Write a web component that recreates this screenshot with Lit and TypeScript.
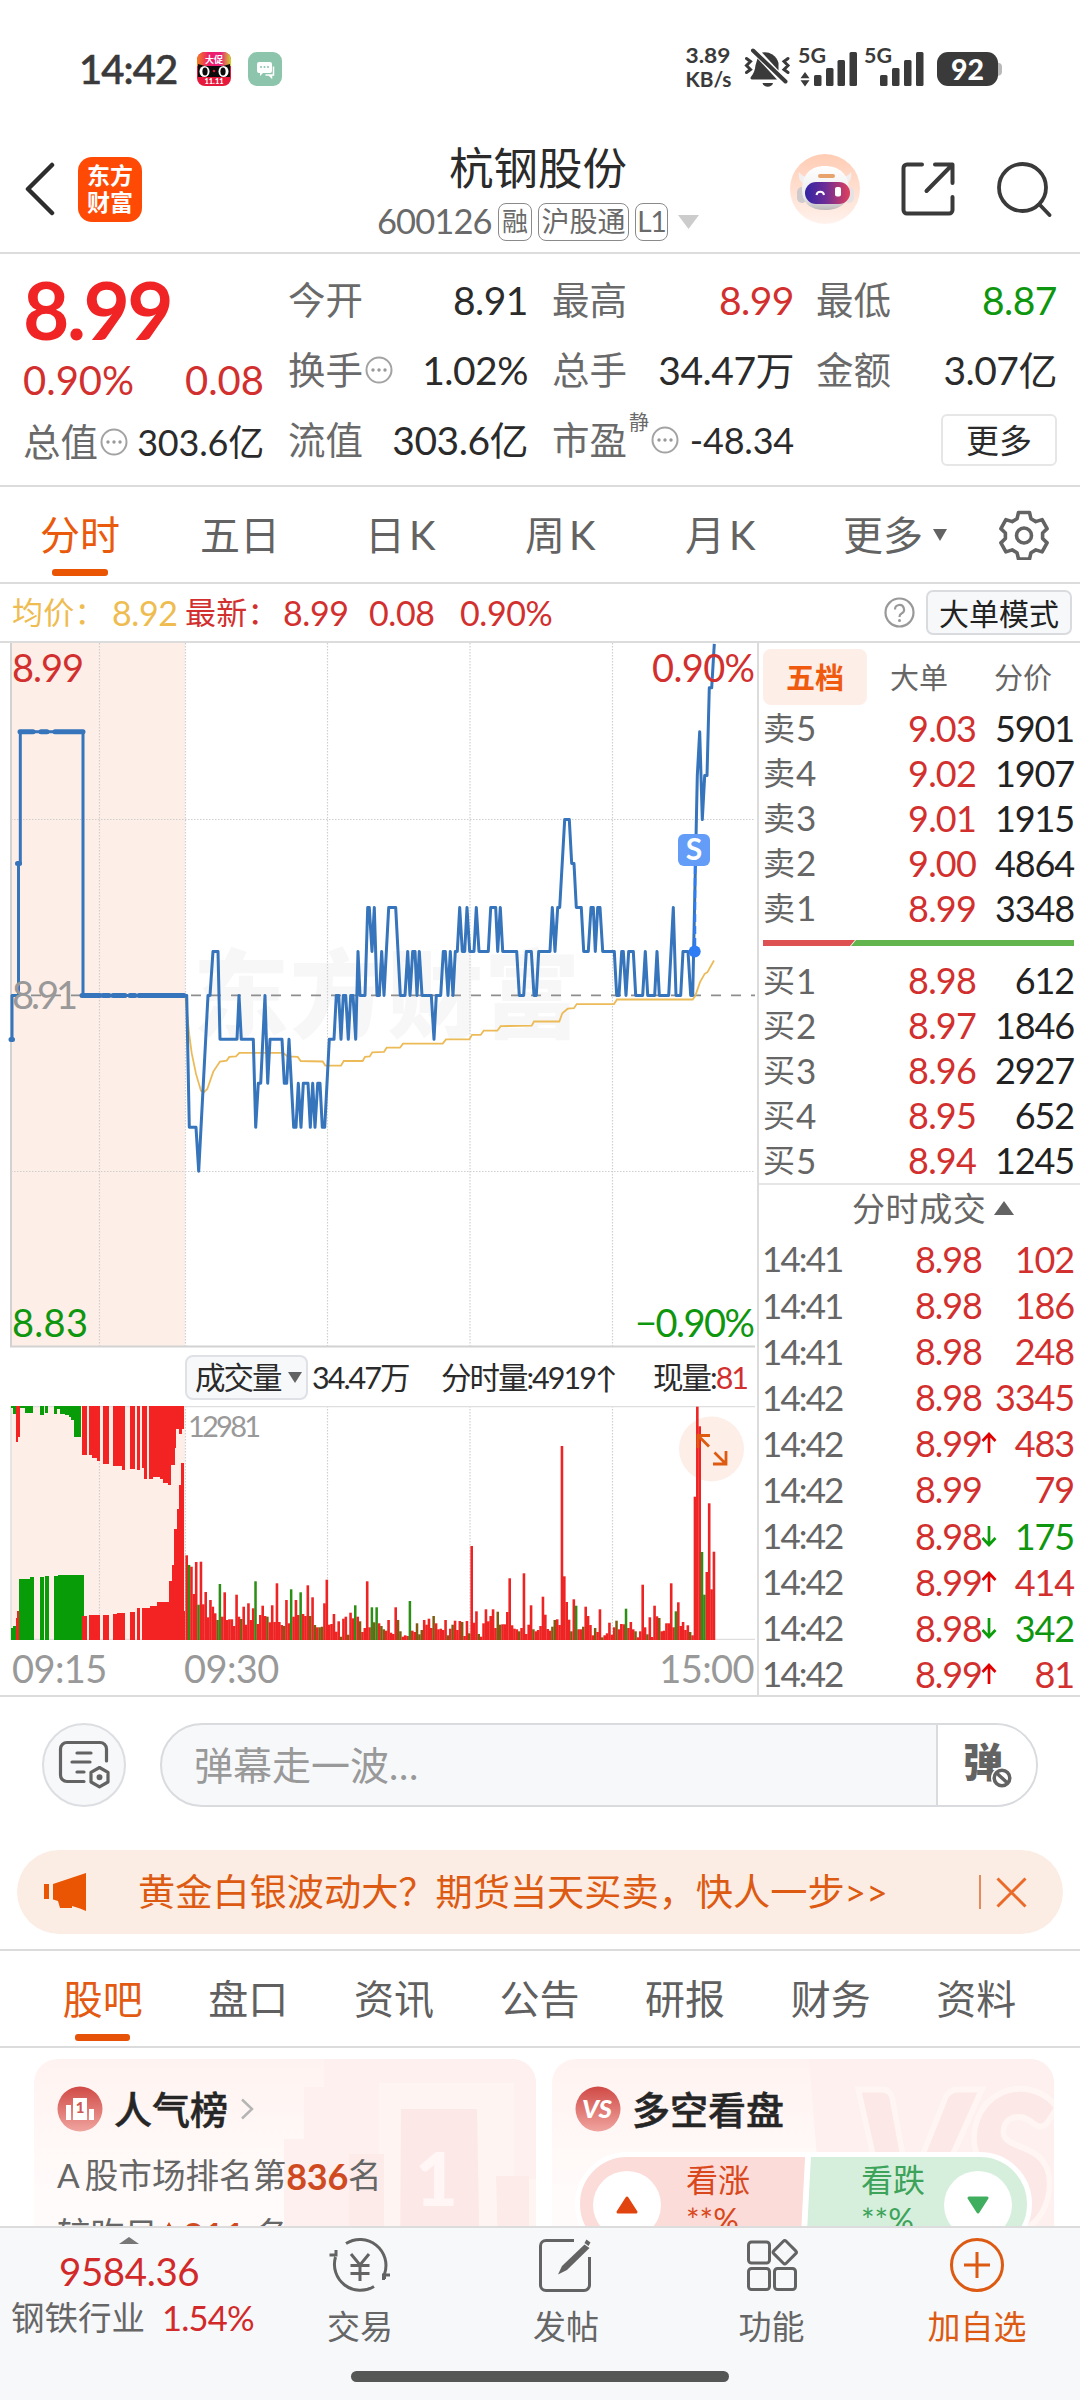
import { LitElement, html, svg, css } from "lit";
import { customElement } from "lit/decorators.js";

/* ---------- data ---------- */

// Pre-market trace: x, price offset from 8.91 in cents
const PRE: number[][] = [
  [12, -1], [12, 0], [18.5, 0], [18.5, 3], [20.3, 3], [20.3, 6], [83, 6], [83, 0], [185, 0],
];

// Session trace, x in thirds of a pixel
const AM: number[][] = [
  [556, 0], [560, 0], [568, -3], [588, -3], [596, -4], [624, 0], [630, 0], [639, 1], [654, 1], [660, -1], [711, -1],
  [717, 0], [724, -1], [760, -1], [767, -3], [775, -2], [782, -2], [795, 0], [803, -2], [810, -1], [846, -1],
  [853, -2], [860, -2], [867, -1], [881, -3], [888, -3], [895, -2], [903, -3], [910, -2], [924, -2], [931, -3],
  [938, -2], [945, -3], [953, -2], [960, -2], [967, -3], [974, -3], [988, -1], [1002, -1], [1009, 0], [1016, 0],
  [1023, -1], [1030, 0], [1037, 0], [1045, -1], [1052, 0], [1059, 0], [1067, -1], [1074, 1], [1080, 0], [1095, 0],
  [1103, 2], [1108, 2], [1116, 1], [1123, 2], [1131, 0], [1138, 0], [1145, 1], [1152, 0], [1166, 2], [1187, 2],
];
const PM: number[][] = [
  [301, 0], [315, 0], [323, 1], [330, 0], [338, 1], [345, 1], [351, 0], [358, 1], [366, 0], [394, 0], [402, -1],
  [409, 0], [422, 0], [430, 1], [436, 1], [444, 0], [451, 1], [459, 0], [466, 1], [472, 1], [479, 2], [487, 1],
  [494, 1], [501, 2], [509, 1], [522, 1], [529, 2], [537, 1], [565, 1], [572, 2], [587, 2], [593, 1], [601, 2],
  [608, 1], [650, 1], [658, 0], [671, 0], [679, 1], [694, 1], [702, 0], [709, 0], [716, 1], [750, 1], [757, 2],
  [765, 1], [773, 2], [779, 2], [794, 4], [808, 4], [815, 3], [822, 3], [829, 2], [844, 2], [851, 1], [865, 1],
  [873, 2], [880, 2], [886, 1], [893, 2], [900, 2], [908, 1], [943, 1], [950, 0], [957, 0], [965, 1], [970, 1],
  [978, 0], [986, 1], [1000, 1], [1007, 0], [1028, 0], [1036, 1], [1043, 0], [1064, 0], [1071, 1], [1078, 0],
  [1106, 0], [1120, 2], [1128, 0], [1142, 0], [1149, 1], [1164, 1], [1172, 0], [1178, 0], [1192, 5], [1199, 6],
  [1207, 4], [1214, 5], [1221, 5], [1228, 7], [1235, 7], [1243, 8],
];
const AVG: number[][] = [
  [556, 774], [568, 860], [575, 900], [588, 945], [603, 982], [612, 985], [622, 978], [640, 940], [660, 918],
  [680, 916], [688, 908], [708, 907], [718, 899], [850, 899], [862, 907], [893, 908], [902, 917], [968, 918],
  [976, 927], [1023, 927], [1031, 917], [1088, 917], [1095, 908], [1109, 907], [1117, 898], [1152, 897],
  [1160, 888], [1200, 888], [1209, 879], [1328, 879], [1338, 870], [1408, 870], [1416, 860], [1442, 860],
  [1451, 851], [1492, 851], [1502, 841], [1595, 840], [1602, 831], [1678, 831], [1687, 813], [1703, 803],
  [1722, 802], [1730, 793], [1842, 793], [1851, 783], [2078, 783], [2086, 775], [2100, 745], [2114, 727],
  [2122, 724], [2142, 698],
];

const MID = 995.4;
const CENT = 43.95;
const pricePts = [
  ...PRE.map(([x, v]) => [x, MID - v * CENT]),
  ...AM.map(([x, v]) => [x / 3, MID - v * CENT]),
  ...PM.map(([x, v]) => [300 + x / 3, MID - v * CENT]),
].map(([x, y]) => `${x.toFixed(1)},${y.toFixed(1)}`).join(" ");
const avgPts = AVG.map(([x, y]) => {
  const px = x > 1200 ? 300 + (x - 900) / 3 : x / 3;
  return `${px.toFixed(1)},${(640 + y / 2.178).toFixed(1)}`;
}).join(" ");

// One entry per minute: height and direction
const MINUTES = (
  "254r 225g 220r 138r 234r 106g 235r 107r 144r 68r 120r 100r 80r 60g 168g 70r 143r 60r 62r 62r 42r 136r 70r 63g " +
  "100r 46r 110r 60r 95r 176g 48r 75r 103r 72r 70g 53r 104r 54r 170r 54r 45r 42g 120r 50r 152g 70r 120r 75r 143g " +
  "78r 72r 164r 72g 128r 45g 38r 38g 40g 110r 181r 46r 48r 78r 25r 56r 10g 64r 70r 16g 82r 65r 104g 70r 56g 24r " +
  "36r 176r 38r 98g 53g 98g 50r 42g 32g 28r 60r 22r 18r 98r 60g 26g 10r 14r 12r 117g 28r 24r 50g 17g 30g 60r 46r " +
  "64r 36r 72g 50r 32r 34r 30r 60r 14g 34r 46g 58r 30r 57r 54g 12r 57r 20g 282r 52r 86r 18g 10r 50r 92r 56r 72r " +
  "92r 36r 85g 46g 47r 47r 84r 185r 44r 34r 32r 26g 36r 200r 18r 46r 104r 32g 26r 30r 42r 130r 76r 33r 28r 40g " +
  "60g 62r 45r 582r 191r 114r 61r 26g 122r 103g 32r 32r 40g 100r 72r 45r 14r 36g 24r 92r 8g 14r 20r 52r 16r 38r " +
  "58g 32r 48r 47r 94g 36r 54r 32r 26g 8r 26r 166r 38r 17g 68r 9r 103r 71r 66g 26r 28r 50r 50r 170r 38r 86g 113r " +
  "42r 54r 30r 44r 24g 14r 430r 700r 641r 264g 136g 204r 410r 152r 265r"
).split(" ").map((s) => ({ h: parseInt(s, 10), up: s.endsWith("r") }));

// Auction bars hanging from the top: x0, x1, y1, direction
const TOP: [number, number, number, string][] = [
  [33, 40, 204, "g"], [40, 48, 223, "g"], [48, 54, 306, "r"], [54, 60, 292, "r"], [60, 75, 203, "g"],
  [75, 100, 219, "g"], [120, 132, 224, "g"], [136, 145, 220, "g"], [162, 172, 221, "g"], [172, 180, 206, "g"],
  [180, 196, 221, "g"], [196, 206, 226, "g"], [206, 214, 232, "g"], [214, 222, 241, "g"], [222, 243, 290, "g"],
  [246, 262, 344, "r"], [268, 277, 344, "r"], [277, 290, 354, "r"], [290, 300, 363, "r"], [308, 328, 373, "r"],
  [338, 365, 377, "r"], [365, 375, 390, "r"], [389, 404, 387, "r"], [410, 421, 391, "r"], [425, 433, 384, "r"],
  [433, 442, 416, "r"], [447, 458, 416, "r"], [458, 480, 410, "r"], [480, 490, 418, "r"], [490, 503, 428, "r"],
  [503, 512, 434, "r"], [512, 524, 375, "r"], [524, 528, 325, "r"], [528, 536, 268, "r"], [536, 545, 281, "r"],
  [545, 552, 268, "r"],
];
const BOTTOM: [number, number, number, string][] = [
  [33, 40, 865, "g"], [40, 48, 857, "g"], [48, 52, 835, "r"], [52, 58, 813, "r"], [57, 91, 717, "g"],
  [91, 102, 712, "g"], [120, 132, 710, "g"], [136, 146, 709, "g"], [162, 175, 709, "g"], [175, 252, 706, "g"],
  [246, 262, 828, "r"], [268, 300, 826, "r"], [308, 328, 825, "r"], [338, 352, 822, "r"], [352, 375, 819, "r"],
  [389, 404, 816, "r"], [410, 421, 804, "r"], [425, 434, 804, "r"], [434, 450, 804, "r"], [450, 470, 797, "r"],
  [470, 508, 787, "r"], [508, 516, 723, "r"], [516, 521, 675, "r"], [521, 530, 567, "r"], [530, 538, 508, "r"],
  [538, 543, 435, "r"], [543, 552, 370, "r"], [552, 556, 813, "r"],
];

const RED = "#f42323";
const GREEN = "#089c08";

const ASKS = [["卖5", "9.03", "5901"], ["卖4", "9.02", "1907"], ["卖3", "9.01", "1915"], ["卖2", "9.00", "4864"], ["卖1", "8.99", "3348"]];
const BIDS = [["买1", "8.98", "612"], ["买2", "8.97", "1846"], ["买3", "8.96", "2927"], ["买4", "8.95", "652"], ["买5", "8.94", "1245"]];
const TICKS: [string, string, string, string][] = [
  ["14:41", "8.98", "", "102"], ["14:41", "8.98", "", "186"], ["14:41", "8.98", "", "248"], ["14:42", "8.98", "", "3345"],
  ["14:42", "8.99", "up", "483"], ["14:42", "8.99", "", "79"], ["14:42", "8.98", "down", "175"], ["14:42", "8.99", "up", "414"],
  ["14:42", "8.98", "down", "342"], ["14:42", "8.99", "up", "81"],
];

const FONT = css`
  :host { display: block; box-sizing: border-box; font-family: "Lato", "Noto Sans CJK SC", sans-serif; line-height: 1; color: #2b2b2b; }
  *, *::before, *::after { box-sizing: border-box; }
  svg { display: block; flex: none; }
  .row { display: flex; align-items: center; white-space: nowrap; }
  .red { color: #d2302e; }
  .green { color: #0f960f; }
`;

/* ---------- status bar ---------- */

@customElement("status-bar")
class StatusBar extends LitElement {
  static styles = [FONT, css`
    :host { height: 110px; padding-top: 44px; background: #fff; }
    .bar { height: 50px; padding: 0 76px 0 79px; }
    .time { font-size: 40px; font-weight: 500; color: #3a3a3a; -webkit-text-stroke: 0.6px #3a3a3a; letter-spacing: -0.9px; width: 118px; }
    .apps { gap: 17px; flex: 1; }
  `];
  render() {
    return html`<div class="row bar">
      <div class="time">14:42</div>
      <div class="row apps">
        <svg width="34" height="34" viewBox="0 0 34 34">
          <defs>
            <linearGradient id="hd" x1="0" x2="1"><stop offset="0" stop-color="#f0821e"/><stop offset=".35" stop-color="#ee1b6a"/><stop offset=".7" stop-color="#e8207c"/><stop offset="1" stop-color="#cfd82a"/></linearGradient>
            <clipPath id="rc"><rect width="34" height="34" rx="8"/></clipPath>
          </defs>
          <g clip-path="url(#rc)">
            <rect width="34" height="34" fill="#e6183c"/>
            <rect width="34" height="14" fill="url(#hd)"/>
            <path d="M1 12 L8 14 H26 L33 12 V25 H1Z" fill="#0b0b0b"/>
            <ellipse cx="7.500" cy="19.500" rx="5" ry="5.500" fill="#fff"/><ellipse cx="26.500" cy="19.500" rx="5" ry="5.500" fill="#fff"/>
            <ellipse cx="8" cy="19.500" rx="2.600" ry="4" fill="#0b0b0b"/><ellipse cx="26" cy="19.500" rx="2.600" ry="4" fill="#0b0b0b"/>
            <circle cx="17" cy="19" r="1.200" fill="#e6183c"/>
            <text x="17" y="10.500" font-size="9" font-weight="700" fill="#fff" text-anchor="middle">大促</text>
            <text x="17" y="32" font-size="7.500" font-weight="900" fill="#fff" text-anchor="middle">11.11</text>
          </g>
        </svg>
        <svg width="34" height="34" viewBox="0 0 34 34">
          <rect width="34" height="34" rx="9" fill="#8cc5ab"/>
          <path d="M11 10h11a2 2 0 0 1 2 2v7a2 2 0 0 1-2 2h-7l-3 3v-3h-1a2 2 0 0 1-2-2v-7a2 2 0 0 1 2-2z" fill="#fff"/>
          <path d="M25.500 14.500v8.500h-8M23.500 23v2.500l-2.500-2.500" fill="none" stroke="#fff" stroke-width="1.500"/>
          <g fill="#8cc5ab"><circle cx="13" cy="15" r="1"/><circle cx="16.500" cy="15" r="1"/><circle cx="20" cy="15" r="1"/></g>
        </svg>
      </div>
      <svg width="320" height="62" viewBox="684 38 320 62" fill="#3a3a3a">
        <text x="685.500" y="63" font-size="21.500" font-weight="700" textLength="45" lengthAdjust="spacingAndGlyphs">3.89</text>
        <text x="685.500" y="86.500" font-size="20" font-weight="700" textLength="46" lengthAdjust="spacingAndGlyphs">KB/s</text>
        <path d="M762 52.500a14 14 0 0 1 16.500 10.500v7.500z"/>
        <path d="M757.500 58.500 L777 79.500 H752 a1.500 1.500 0 0 1-1.300-2.300c3-4 4.300-7 4.800-12z"/>
        <path d="M762.500 83h10.500c-1 5-9.500 5-10.500 0z"/>
        <path d="M753 50.500 L785.500 81.500" stroke="#3a3a3a" stroke-width="4" stroke-linecap="round"/>
        <path d="M746.500 58.500l4 3-4 4 4 4-4 3M788 58.500l-4 3 4 4-4 4 4 3" fill="none" stroke="#3a3a3a" stroke-width="3" stroke-linecap="round"/>
        <text x="798" y="63" font-size="21" font-weight="700" textLength="28" lengthAdjust="spacingAndGlyphs">5G</text>
        <path d="M805 72 l4.500 6.200h-9zM805 86.500l4.500-6.200h-9z"/>
        <rect x="814" y="75" width="7.500" height="11" rx="1.500"/><rect x="826" y="68" width="7.500" height="18" rx="1.500"/>
        <rect x="837.500" y="60" width="7.500" height="26" rx="1.500"/><rect x="849.500" y="52" width="7.500" height="34" rx="1.500"/>
        <text x="864" y="63" font-size="21" font-weight="700" textLength="28" lengthAdjust="spacingAndGlyphs">5G</text>
        <rect x="880" y="75" width="7.500" height="11" rx="1.500"/><rect x="892" y="68" width="7.500" height="18" rx="1.500"/>
        <rect x="904" y="60" width="7.500" height="26" rx="1.500"/><rect x="916" y="52" width="7.500" height="34" rx="1.500"/>
        <path d="M996 62.500c4 0 6 1.500 6 4v5.500c0 2.500-2 4-6 4z" fill="#b9b9b9"/>
        <rect x="937" y="52" width="61" height="34" rx="11"/>
        <text x="951" y="79.500" font-size="28" font-weight="900" fill="#fff" textLength="33" lengthAdjust="spacingAndGlyphs">92</text>
      </svg>
    </div>`;
  }
}

/* ---------- header ---------- */

@customElement("stock-header")
class StockHeader extends LitElement {
  static styles = [FONT, css`
    :host { height: 144px; border-bottom: 2px solid #dcdcdc; background: #fff; }
    .bar { display: grid; grid-template-columns: 1fr auto 1fr; align-items: center; height: 142px; padding: 16px 28px 0 24px; }
    .left { gap: 23px; }
    .logo { width: 64px; height: 65px; border-radius: 14px; background: #ff4a06; color: #fff; font-weight: 700; font-size: 23px; line-height: 27px; text-align: center; padding-top: 5px; }
    .mid { display: flex; flex-direction: column; align-items: center; padding-top: 9px; }
    .name { font-size: 44.500px; line-height: 56px; height: 56px; }
    .sub { height: 52px; color: #6a6a6a; }
    .code { font-size: 34.500px; letter-spacing: -0.900px; width: 121px; }
    .tag { height: 38px; border: 1.500px solid #8a8a8a; border-radius: 8px; font-size: 28px; line-height: 35px; margin-right: 6px; text-align: center; }
    .t1 { width: 34px; font-size: 26px; } .t2 { width: 91px; } .t3 { width: 33px; letter-spacing: -1px; margin-right: 10px; }
    .right { justify-content: flex-end; }
    .share { margin: 0 42px 0 41px; }
  `];
  render() {
    return html`<div class="bar">
      <div class="row left">
        <svg width="31" height="54" viewBox="0 0 31 54"><path d="M28 3 L4 27 L28 51" fill="none" stroke="#2d2d2d" stroke-width="4.500" stroke-linecap="round" stroke-linejoin="round"/></svg>
        <div class="logo">东方<br>财富</div>
      </div>
      <div class="mid">
        <div class="name">杭钢股份</div>
        <div class="row sub"><span class="code">600126</span><span class="tag t1">融</span><span class="tag t2">沪股通</span><span class="tag t3">L1</span>
          <svg width="21" height="14" viewBox="0 0 21 14"><path d="M0 0H21L10.500 14Z" fill="#ccc"/></svg></div>
      </div>
      <div class="row right">
        <svg width="70" height="70" viewBox="0 0 70 70">
          <defs>
            <linearGradient id="bg" x2="0" y2="1"><stop offset="0" stop-color="#ffccb4"/><stop offset="1" stop-color="#fff2ec"/></linearGradient>
            <linearGradient id="fc"><stop offset="0" stop-color="#3325a4"/><stop offset=".45" stop-color="#6b2d96"/><stop offset="1" stop-color="#e0405c"/></linearGradient>
            <linearGradient id="hl" x2="0" y2="1"><stop offset="0" stop-color="#ffffff"/><stop offset=".7" stop-color="#eeecec"/><stop offset="1" stop-color="#bdb9bb"/></linearGradient>
          </defs>
          <circle cx="35" cy="35" r="35" fill="url(#bg)"/>
          <path d="M9 18c-1 6 1 11 6 12l5-7c-6 0-9-2-11-5zM61 18c1 6-1 11-6 12l-5-7c6 0 9-2 11-5z" fill="#f3efef"/>
          <rect x="7" y="33" width="10" height="16" rx="5" fill="#cfcacc"/><rect x="54" y="33" width="10" height="16" rx="5" fill="#e6e1e3"/>
          <path d="M12 36c0-16 9-24 23-24s24 8 24 24c0 13-9 20-24 20s-23-7-23-20z" fill="url(#hl)"/>
          <rect x="28" y="20" width="17" height="4" rx="2" fill="#e8a36c"/>
          <rect x="15" y="28" width="45" height="22" rx="11" fill="url(#fc)"/>
          <path d="M26.500 41a3.800 3.800 0 0 1 7.500 0" fill="none" stroke="#fff" stroke-width="2"/>
          <rect x="45" y="33" width="6" height="9.500" rx="2" fill="#fff"/>
        </svg>
        <svg class="share" width="54" height="54" viewBox="0 0 54 54" fill="none" stroke="#3a3a3a" stroke-width="4" stroke-linecap="round" stroke-linejoin="round">
          <path d="M21 2.500H6a3.500 3.500 0 0 0-3.500 3.500v42a3.500 3.500 0 0 0 3.500 3.500h42a3.500 3.500 0 0 0 3.500-3.500V35M34 2.500h17.500V21M51 3 L25.500 29"/></svg>
        <svg width="55" height="55" viewBox="0 0 55 55" fill="none" stroke="#3a3a3a" stroke-width="3.800" stroke-linecap="round"><circle cx="25.500" cy="25.500" r="23.500"/><path d="M42.500 42.500 L52.500 53"/></svg>
      </div>
    </div>`;
  }
}

/* ---------- quote summary ---------- */

const dots = html`<svg width="28" height="28" viewBox="0 0 28 28"><circle cx="14" cy="14" r="12.500" fill="none" stroke="#a3a3a3" stroke-width="2"/><g fill="#999"><circle cx="8" cy="14" r="1.700"/><circle cx="14" cy="14" r="1.700"/><circle cx="20" cy="14" r="1.700"/></g></svg>`;

@customElement("quote-summary")
class QuoteSummary extends LitElement {
  static styles = [FONT, css`
    :host { height: 233px; border-bottom: 2px solid #dcdcdc; background: #fff; }
    .grid { display: grid; grid-template-columns: 241px 240px 242px 241px; column-gap: 24px; padding: 11px 0 0 23px; }
    .grid > :nth-child(4) { margin-left: -2px; margin-right: 2px; }
    .cell { height: 70px; justify-content: space-between; font-size: 39px; letter-spacing: -0.5px; }
    .l { color: #6a6a6a; font-size: 37.500px; letter-spacing: 0; display: flex; align-items: center; }
    .price { height: 87px; font-size: 80px; font-weight: 700; color: #f02424; letter-spacing: -2.5px; }
    .chg { height: 55px; font-size: 40px; letter-spacing: 0; }
    .sm { font-size: 36px; letter-spacing: -0.2px; }
    .sup { font-size: 20px; align-self: flex-start; margin: -9px 2px 0 2px; }
    .more { width: 116px; height: 52px; border: 2px solid #e6e6e6; border-radius: 6px; font-size: 33px; letter-spacing: 0; display: flex; align-items: center; justify-content: center; margin-left: auto; }
    .c { margin-left: 2px; }
  `];
  render() {
    return html`<div class="grid">
      <div><div class="row price">8.99</div>
        <div class="row cell chg red"><span>0.90%</span><span>0.08</span></div>
        <div class="row cell"><span class="l">总值<span class="c">${dots}</span></span><span class="sm">303.6亿</span></div></div>
      <div><div class="row cell"><span class="l">今开</span><span>8.91</span></div>
        <div class="row cell"><span class="l">换手<span class="c">${dots}</span></span><span>1.02%</span></div>
        <div class="row cell"><span class="l">流值</span><span>303.6亿</span></div></div>
      <div><div class="row cell"><span class="l">最高</span><span class="red">8.99</span></div>
        <div class="row cell"><span class="l">总手</span><span>34.47万</span></div>
        <div class="row cell"><span class="l">市盈<span class="sup">静</span>${dots}</span><span class="sm">-48.34</span></div></div>
      <div><div class="row cell"><span class="l">最低</span><span class="green">8.87</span></div>
        <div class="row cell"><span class="l">金额</span><span>3.07亿</span></div>
        <div class="row cell"><span class="more">更多</span></div></div>
    </div>`;
  }
}

/* ---------- period tabs + legend ---------- */

@customElement("period-tabs")
class PeriodTabs extends LitElement {
  static styles = [FONT, css`
    :host { background: #fff; }
    .tabs { height: 97px; border-bottom: 2px solid #dcdcdc; font-size: 40px; color: #636363; padding-left: 40px; }
    .tab { width: 80px; height: 95px; display: flex; flex-direction: column; align-items: center; padding-top: 28px; margin-right: 80px; }
    .five { margin-right: 85px; }
    .k { width: 76px; margin-right: 84px; letter-spacing: 4px; align-items: flex-start; }
    .on { color: #ea5a0c; }
    .on i { width: 56px; height: 7px; border-radius: 3px; background: #ea5504; margin-top: 14px; }
    .more { margin-right: 10px; margin-left: -2px; }
    .tri { margin-right: 52px; }
    .legend { height: 59px; border-bottom: 2px solid #dcdcdc; font-size: 34px; padding: 0 8px 0 12px; letter-spacing: -0.4px; }
    .legend b { font-weight: 400; font-size: 31px; letter-spacing: 0.3px; }
    .a1 { width: 100px; color: #eebc50; } .a2 { width: 73px; color: #eebc50; } .a3 { width: 98px; } .a4 { width: 86px; } .a5 { width: 91px; } .a6 { flex: 1; }
    .btn { width: 146px; height: 45px; margin-left: 11px; border: 2px solid #d9dbde; border-radius: 7px; background: #f7f8fa; color: #222; font-size: 30px; letter-spacing: 0; display: flex; align-items: center; justify-content: center; }
  `];
  render() {
    return html`<div class="row tabs">
      <div class="tab on">分时<i></i></div><div class="tab five">五日</div>
      <div class="tab k">日K</div><div class="tab k">周K</div><div class="tab k">月K</div>
      <div class="tab more">更多</div>
      <svg class="tri" width="14" height="12" viewBox="0 0 14 12"><path d="M0 0H14L7 12Z" fill="#636363"/></svg>
      <svg width="50" height="50" viewBox="0 0 50 50" fill="none" stroke="#636363" stroke-width="3.600" stroke-linejoin="round">
        <path d="M19.500 2.500h11l1.500 6.300 4.800 2.800 6.300-2 5 9-4.500 4.400v5.500l4.500 4.400-5 9-6.300-2-4.800 2.800-1.500 6.300h-11L18 42.700l-4.800-2.800-6.300 2-5-9 4.500-4.400v-5.500l-4.500-4.400 5-9 6.300 2L18 8.800z"/>
        <circle cx="25" cy="25.500" r="7.500"/></svg>
    </div>
    <div class="row legend red">
      <b class="a1">均价：</b><span class="a2">8.92</span><b class="a3">最新：</b><span class="a4">8.99</span><span class="a5">0.08</span><span class="a6">0.90%</span>
      <svg width="31" height="31" viewBox="0 0 31 31"><circle cx="15.500" cy="15.500" r="14" fill="none" stroke="#999" stroke-width="2.200"/><path d="M11 12.500a4.500 4.500 0 1 1 6.500 4c-1.500.8-2 1.500-2 3.500" fill="none" stroke="#999" stroke-width="2.200"/><circle cx="15.500" cy="23.500" r="1.500" fill="#999"/></svg>
      <span class="btn">大单模式</span>
    </div>`;
  }
}

/* ---------- charts ---------- */

@customElement("price-chart")
class PriceChart extends LitElement {
  static styles = [FONT, css`
    :host { width: 757px; height: 1052px; flex: none; }
    .head { height: 58px; padding-left: 185px; font-size: 30.500px; letter-spacing: -2px; }
    .pick { width: 123px; height: 45px; border: 2px solid #dfe1e6; border-radius: 8px; background: #f7f8fa; display: flex; align-items: center; padding-left: 8px; gap: 7px; margin-right: 4px; }
    .amount { width: 129px; } .minute { width: 212px; }
    .times { height: 56px; padding: 0 3px 0 12px; font-size: 38px; letter-spacing: -0.6px; color: #999; }
    .t1 { width: 172px; } .t2 { flex: 1; }
  `];
  render() {
    const fill = (c: string) => (c === "g" ? GREEN : RED);
    return html`
      <svg width="757" height="705" viewBox="0 643 757 705">
        <rect x="11" y="643" width="174" height="704" fill="#fdeee7"/>
        <text y="1030" x="193" font-size="96" font-weight="900" fill="#f7f7f7" textLength="387">东方财富</text>
        <g stroke="#cfcfcf" stroke-width="1.200" stroke-dasharray="1.500 1.500">
          ${[99.5, 185.5, 327.5, 470, 612.5].map((x) => svg`<path d="M${x} 643V1347"/>`)}
          <path d="M11 819.500H755M11 1171.500H755"/>
        </g>
        <path d="M11 643V1346.500H755" fill="none" stroke="#d2d2d2" stroke-width="2"/>
        <path d="M11 995.400H755" stroke="#8e8e8e" stroke-width="1.800" stroke-dasharray="10 10"/>
        <polyline points=${avgPts} fill="none" stroke="#ecbb58" stroke-width="1.800"/>
        <polyline points=${pricePts} fill="none" stroke="#3674bb" stroke-width="3" stroke-linejoin="round"/>
        <g stroke="#3674bb" stroke-width="5" stroke-linecap="round" fill="none">
          <path d="M20 731.700H33M41 731.700H47M55 731.700H83M82 995.400H100M103 995.400H109M113 995.400H125M130 995.400H135M139 995.400H184M17.500 863.500H19.500M11 1039.500H12.500"/>
        </g>
        <path d="M695 866V951" stroke="#2f7df5" stroke-width="2.500" stroke-dasharray="8 4"/>
        <circle cx="694.700" cy="951.500" r="6" fill="#2f7df5"/>
        <rect x="678" y="834" width="32" height="32" rx="6" fill="#639df8"/>
        <text x="694" y="860" font-size="30" font-weight="700" fill="#fff" text-anchor="middle">S</text>
        <g font-size="38">
          <g fill="#d2302e"><text x="12" y="682" textLength="72">8.99</text><text x="652" y="682" textLength="103">0.90%</text></g>
          <text x="12" y="1009" textLength="66" fill="#999">8.91</text>
          <g fill="#0f960f"><text x="12" y="1337" textLength="76">8.83</text><text x="635" y="1337" textLength="120">−0.90%</text></g>
        </g>
      </svg>
      <div class="row head">
        <span class="pick">成交量<svg width="14" height="11" viewBox="0 0 14 11"><path d="M0 0H14L7 11Z" fill="#636363"/></svg></span>
        <span class="amount">34.47万</span><span class="minute">分时量:4919↑</span><span>现量:<span class="red">81</span></span>
      </div>
      <svg width="757" height="234" viewBox="0 1406 757 234">
        <rect x="11" y="1406" width="174" height="234" fill="#fdeee7"/>
        <g stroke="#cfcfcf" stroke-width="1.200" stroke-dasharray="1.500 1.500">
          ${[99.5, 185.5, 327.5, 470, 612.5].map((x) => svg`<path d="M${x} 1406V1640"/>`)}
        </g>
        <path d="M11 1406.500H755M11 1406V1640M11 1639.500H755" fill="none" stroke="#dedede" stroke-width="1.500"/>
        <circle cx="711.500" cy="1449" r="32.500" fill="#fdeee7"/>
        <g shape-rendering="crispEdges">
          ${TOP.map(([a, b, y, c]) => svg`<rect x=${a / 3} y="1406" width=${(b - a) / 3} height=${(y - 198) / 3} fill=${fill(c)}/>`)}
          ${BOTTOM.map(([a, b, y, c]) => svg`<rect x=${a / 3} y=${1340 + y / 3} width=${(b - a) / 3} height=${(900 - y) / 3} fill=${fill(c)}/>`)}
        </g>
        ${MINUTES.map((m, i) => svg`<rect x=${(185.4 + i * 2.375).toFixed(2)} y=${(1640 - m.h / 3).toFixed(1)} width=${m.up ? 2.6 : 2.5} height=${(m.h / 3).toFixed(1)} fill=${m.up ? "#ee2424" : m.h > 85 ? "#2a8f14" : "#7d5c12"}/>`)}
        <text x="188" y="1436.500" font-size="29" fill="#999" textLength="73">12981</text>
        <g fill="none" stroke="#dd5a10" stroke-width="2.800"><path d="M698 1448V1435.500H710M698.500 1436L709 1446.500M726 1451V1464H713M725.500 1463.500L714.500 1452.500"/></g>
      </svg>
      <div class="row times"><span class="t1">09:15</span><span class="t2">09:30</span><span>15:00</span></div>`;
  }
}

/* ---------- order book ---------- */

@customElement("order-book")
class OrderBook extends LitElement {
  static styles = [FONT, css`
    :host { flex: 1; min-width: 0; height: 1052px; border-left: 2px solid #dcdcdc; }
    .tabs { height: 62px; padding: 6px 0 0 4px; font-size: 29px; color: #666; }
    .tab { width: 104px; height: 56px; border-radius: 8px; display: flex; align-items: center; justify-content: center; flex: none; }
    .on { background: #fdeee7; color: #ef5a0e; font-weight: 700; }
    .q { height: 45.100px; padding: 0 6px 0 4px; font-size: 36px; letter-spacing: -0.8px; }
    .n { color: #666; width: 102px; font-size: 35px; display: flex; align-items: center; }
    .cj { font-size: 32px; margin-right: 1px; letter-spacing: 0; }
    .p { width: 111px; text-align: right; color: #d2302e; }
    .v { flex: 1; min-width: 0; text-align: right; color: #222; letter-spacing: -1.1px; }
    .ratio { padding: 10px 0 12px 4px; height: 27px; }
    .deals { height: 53px; border-top: 2px solid #e6e6e6; font-size: 33px; color: #666; padding: 0 0 4px 93px; gap: 8px; letter-spacing: 0.6px; }
    .t { height: 46.100px; padding: 0 6px 0 3px; font-size: 36px; letter-spacing: -1.1px; }
    .time { width: 153px; color: #666; font-size: 35px; letter-spacing: -1.9px; }
    .tp { width: 66px; color: #d2302e; }
    .ar { margin-right: -12px; }
    .tv { flex: 1; min-width: 0; text-align: right; color: #d2302e; }
    .g { color: #0f960f; }
  `];
  private quote(r: string[]) {
    return html`<div class="row q"><span class="n"><span class="cj">${r[0][0]}</span>${r[0][1]}</span><span class="p">${r[1]}</span><span class="v">${r[2]}</span></div>`;
  }
  render() {
    return html`
      <div class="row tabs"><div class="tab on">五档</div><div class="tab">大单</div><div class="tab">分价</div></div>
      ${ASKS.map((r) => this.quote(r))}
      <div class="ratio"><svg width="311" height="6" viewBox="0 0 311 6"><path d="M0 0H92L87 6H0Z" fill="#dd5152"/><path d="M93 0H311V6H88Z" fill="#62b54c"/></svg></div>
      ${BIDS.map((r) => this.quote(r))}
      <div class="row deals">分时成交<svg width="20" height="14" viewBox="0 0 20 14"><path d="M10 0L20 14H0Z" fill="#636363"/></svg></div>
      ${TICKS.map(([t, p, d, v]) => html`<div class="row t"><span class="time">${t}</span><span class="tp">${p}</span>
        <svg class="ar" width="16" height="22" viewBox="0 0 16 22">${d
          ? svg`<path d=${d === "up" ? "M8 21V2.500M1.500 9L8 2L14.500 9" : "M8 1V19.500M1.500 13L8 20L14.500 13"} fill="none" stroke=${d === "up" ? "#e00000" : "#0a9c0a"} stroke-width="2.700"/>`
          : ""}</svg>
        <span class="tv ${d === "down" ? "g" : ""}">${v}</span></div>`)}`;
  }
}

/* ---------- comment bar, promo ---------- */

@customElement("comment-bar")
class CommentBar extends LitElement {
  static styles = [FONT, css`
    :host { height: 256px; border-top: 2px solid #dcdcdc; border-bottom: 2px solid #dcdcdc; background: #fff; }
    .line { padding: 26px 0 0 42px; gap: 34px; }
    .round { width: 84px; height: 84px; border-radius: 50%; border: 2px solid #dcdee2; background: #f7f8fa; display: flex; align-items: center; justify-content: center; }
    .pill { width: 878px; height: 84px; border-radius: 42px; border: 2px solid #d9dbde; background: #f7f8fa; overflow: hidden; }
    .hint { flex: 1; height: 100%; border-right: 2px solid #d9dbde; padding-left: 32px; font-size: 39px; color: #999; display: flex; align-items: center; }
    .dm { width: 98px; height: 100%; background: #fff; display: flex; align-items: center; padding-left: 25px; }
    .promo { margin: 43px 17px 0; height: 84px; border-radius: 42px; background: #fcede4; color: #dd5a12; padding: 0 36px 0 27px; font-size: 37.200px; }
    .txt { flex: 1; padding-left: 51px; }
    .bar { width: 2px; height: 34px; background: #e58a5a; margin-right: 15px; }
  `];
  render() {
    return html`
      <div class="row line">
        <div class="round"><svg width="52" height="50" viewBox="0 0 52 50" fill="none" stroke="#636363" stroke-width="3.200" stroke-linecap="round">
          <path d="M26 41.500H9a6.500 6.500 0 0 1-6.500-6.500V9A6.500 6.500 0 0 1 9 2.500h33A6.500 6.500 0 0 1 48.500 9v12M19 13h14M14 22h18M19 32h7"/>
          <path d="M41.500 27.500l8.500 4.800v9.700l-8.500 4.800-8.500-4.800v-9.700z" stroke-linejoin="round"/><circle cx="41.500" cy="37.200" r="2" fill="#636363" stroke-width="2"/></svg></div>
        <div class="row pill"><div class="hint">弹幕走一波…</div>
          <div class="dm"><svg width="54" height="60" viewBox="0 -6 54 60"><text x="0" y="36" font-size="40" font-weight="900" fill="#636363">弹</text>
            <circle cx="39" cy="37" r="11" fill="#fff"/><circle cx="39" cy="37" r="7.800" fill="none" stroke="#636363" stroke-width="3.500"/><path d="M33.500 32l11 10" stroke="#636363" stroke-width="3.500"/></svg></div></div>
      </div>
      <div class="row promo">
        <svg width="43" height="38" viewBox="0 0 43 38" fill="#ea5504"><rect x="0" y="11" width="5" height="15"/><path d="M9 11 L42 0V38L36 35.500 28 33V35H16L14 28 9 26.500Z"/></svg>
        <span class="txt">黄金白银波动大？期货当天买卖，快人一步&gt;&gt;</span>
        <span class="bar"></span>
        <svg width="31" height="31" viewBox="0 0 31 31"><path d="M1.500 1.500L29.500 29.500M29.500 1.500L1.500 29.500" stroke="#ea6a2a" stroke-width="3"/></svg>
      </div>`;
  }
}

/* ---------- content tabs and cards ---------- */

@customElement("content-cards")
class ContentCards extends LitElement {
  static styles = [FONT, css`
    :host { height: 275px; overflow: hidden; background: #fff; }
    .tabs { height: 97px; padding: 0 31px 0 30px; font-size: 40px; color: #606060; border-bottom: 2px solid #dcdcdc; }
    .tab { flex: 1; height: 95px; display: flex; flex-direction: column; align-items: center; padding-top: 28px; }
    .on { color: #e35a12; }
    .on i { width: 55px; height: 7px; border-radius: 3px; background: #e65208; margin-top: 15px; }
    .cards { display: flex; gap: 16px; padding: 11px 26px 0 34px; }
    .card { width: 502px; height: 220px; border-radius: 24px; background: linear-gradient(#fff3f1, #fffbfa 60%); display: grid; overflow: hidden; }
    .card > * { grid-area: 1 / 1; }
    .body { padding: 27px 0 0 23px; }
    .title { height: 46px; font-size: 38px; font-weight: 500; gap: 11px; color: #262626; -webkit-text-stroke: 0.5px #262626; }
    .rank { margin-top: 24px; height: 40px; font-size: 33.600px; color: #666; }
    .rank b { color: #cf4a20; font-weight: 700; font-size: 36px; letter-spacing: -0.3px; }
    .a { margin-right: 5px; }
    .next { margin-top: 19px; }
    .next svg { margin: 0 6px 0 3px; }
    .next b { margin-right: 10px; }
    .vote { display: flex; width: 457px; height: 104px; margin: 20px 0 0; border: 5px solid #fff; border-radius: 52px; overflow: hidden; background: linear-gradient(93deg, #fcdcd9 0 49.700%, #fff 49.900% 51%, #d6efdc 51.200%); font-size: 32px; padding: 0 15px 0 13px; }
    .ball { width: 68px; height: 68px; border-radius: 50%; background: #fff; margin-top: 14px; display: flex; align-items: center; justify-content: center; }
    .side { display: flex; flex-direction: column; padding-top: 3px; line-height: 40px; }
    .up { color: #d9481c; margin-left: 25px; } .down { color: #3da35a; margin: 0 19px 0 auto; }
  `];
  render() {
    const tabs = ["股吧", "盘口", "资讯", "公告", "研报", "财务", "资料"];
    return html`
      <div class="row tabs">${tabs.map((t, i) => html`<div class="tab ${i ? "" : "on"}">${t}${i ? "" : html`<i></i>`}</div>`)}</div>
      <div class="cards">
        <div class="card">
          <svg width="502" height="220" viewBox="0 0 502 220">
            <path d="M290 0H502V220H250V80H270V28H290Z" fill="#fdf0ee"/>
            <path d="M345 24H480V120H502V220H316V95H345Z" fill="#fef5f3"/>
            <path d="M367 50H443L446 220H366Z" fill="#fce8e6"/><path d="M315 95H350V220H315Z" fill="#fcebe9"/><path d="M462 117H495V220H465Z" fill="#fcebe9"/>
            <text x="381" y="147" font-size="74" font-weight="900" fill="#fff6f5">1</text>
          </svg>
          <div class="body">
            <div class="row title">
              <svg width="46" height="46" viewBox="0 0 46 46"><defs><linearGradient id="ic" x2="0" y2="1"><stop offset="0" stop-color="#d04a46"/><stop offset="1" stop-color="#f0a49f"/></linearGradient></defs>
                <circle cx="23" cy="23" r="22.500" fill="url(#ic)" stroke="none"/><path d="M9 19h5v15H9zM16 12h14v22H16zM32 23h5v11h-5z" fill="#fff" stroke="none"/><text x="23" y="27" font-size="15" font-weight="900" fill="#cf5753" text-anchor="middle" stroke="none">1</text></svg>
              人气榜
              <svg width="16" height="22" viewBox="0 0 16 22"><path d="M3 1.500L13 11L3 20.500" fill="none" stroke="#b5b5b5" stroke-width="2.500"/></svg>
            </div>
            <div class="row rank"><span class="a">A</span>股市场排名第<b>836</b>名</div>
            <div class="row rank next">较昨日<svg width="16" height="26" viewBox="0 0 18 26" preserveAspectRatio="none"><path d="M9 0L18 14H13V26H5V14H0Z" fill="#cf4a20"/></svg><b>211</b>名</div>
          </div>
        </div>
        <div class="card">
          <svg width="502" height="220" viewBox="0 0 502 220">
            <path d="M257 0H502V220H275Z" fill="#fdf0ee"/>
            <text x="302" y="172" font-size="190" font-weight="900" font-style="italic" fill="#fce9e7" stroke="#fff6f4" stroke-width="12" paint-order="stroke" textLength="200" lengthAdjust="spacingAndGlyphs">VS</text>
          </svg>
          <div class="body">
            <div class="row title">
              <svg width="46" height="46" viewBox="0 0 46 46"><defs><linearGradient id="iv" x2="0" y2="1"><stop offset="0" stop-color="#d04a46"/><stop offset="1" stop-color="#f0a49f"/></linearGradient></defs>
                <circle cx="23" cy="23" r="22.500" fill="url(#iv)" stroke="none"/><text x="22" y="32" font-size="25" font-weight="900" font-style="italic" fill="#fff" stroke="none" text-anchor="middle" textLength="30" lengthAdjust="spacingAndGlyphs">VS</text></svg>
              多空看盘
            </div>
            <div class="vote">
              <div class="ball"><svg width="22" height="18" viewBox="0 0 22 18"><path d="M11 2L20 16H2Z" fill="#e2440f" stroke="#e2440f" stroke-width="3" stroke-linejoin="round"/></svg></div>
              <div class="side up"><span>看涨</span><span>**%</span></div>
              <div class="side down"><span>看跌</span><span>**%</span></div>
              <div class="ball"><svg width="22" height="18" viewBox="0 0 22 18"><path d="M11 16L20 2H2Z" fill="#3fae5f" stroke="#3fae5f" stroke-width="3" stroke-linejoin="round"/></svg></div>
            </div>
          </div>
        </div>
      </div>`;
  }
}

/* ---------- bottom bar ---------- */

@customElement("bottom-bar")
class BottomBar extends LitElement {
  static styles = [FONT, css`
    :host { height: 174px; border-top: 2px solid #dcdcdc; background: #f7f8fa; display: flex; flex-direction: column; }
    .items { display: grid; grid-template-columns: 257px 206px 206px 205px 206px; height: 143px; }
    .index { display: flex; flex-direction: column; align-items: flex-start; padding-left: 11px; }
    .tri { margin: 9px 0 0 108px; }
    .val { font-size: 38.500px; color: #d22a2a; margin: 8px 0 0 48px; letter-spacing: -0.4px; height: 39px; }
    .name { font-size: 33.500px; color: #666; height: 36px; margin-top: 9px; gap: 17px; }
    .name span { color: #d22a2a; font-size: 34.500px; letter-spacing: -0.8px; }
    .nav { display: flex; flex-direction: column; align-items: center; padding-top: 9px; gap: 17px; font-size: 33px; color: #666; }
    .add { color: #dd5a12; }
    .home { width: 378px; height: 11px; border-radius: 6px; background: #555756; margin: 0 auto; }
  `];
  render() {
    return html`<div class="items">
      <div class="index"><svg class="tri" width="20" height="7" viewBox="0 0 20 7"><path d="M10 0L20 7H0Z" fill="#777"/></svg>
        <div class="row val">9584.36</div>
        <div class="row name">钢铁行业<span>1.54%</span></div></div>
      <div class="nav"><svg width="62" height="56" viewBox="0 0 62 56" fill="none" stroke="#636363" stroke-width="3">
        <path d="M17 6.500A26 26 0 0 1 55.500 37M55.500 42v-6M45 49.500A26 26 0 0 1 6.500 20M0.500 18h6.500V13M61 38h-6.500v5M22 17l9 11 9-11M31 28v16M21.500 28.500h19M21.500 36.500h19"/></svg>交易</div>
      <div class="nav"><svg width="56" height="56" viewBox="0 0 56 56" fill="none" stroke="#636363" stroke-width="3">
        <path d="M36 3.500H8A5.500 5.500 0 0 0 2.500 9v39A5.500 5.500 0 0 0 8 53.500h38a5.500 5.500 0 0 0 5.500-5.500V20"/>
        <path d="M46.500 7.500L51.500 11 29 33 20 37.500 24 29Z" fill="#636363" stroke="none"/><path d="M48.500 2.500L52.500 5.500 50.500 9 46.500 6Z" fill="#636363" stroke="none"/></svg>发帖</div>
      <div class="nav"><svg width="52" height="56" viewBox="0 0 52 56" fill="none" stroke="#636363" stroke-width="3">
        <rect x="2.500" y="5" width="21" height="21" rx="3"/><rect x="2.500" y="31.500" width="21" height="21" rx="3"/><rect x="28.500" y="31.500" width="21" height="21" rx="3"/>
        <rect x="30" y="6.500" width="17.500" height="17.500" rx="2" transform="rotate(45 38.750 15.250)"/></svg>功能</div>
      <div class="nav add"><svg width="56" height="56" viewBox="0 0 56 56" fill="none" stroke="#dd5a12" stroke-width="3"><circle cx="28" cy="28" r="25.500"/><path d="M28 15v26M15 28h26"/></svg>加自选</div>
    </div><div class="home"></div>`;
  }
}

@customElement("app-root")
class AppRoot extends LitElement {
  static styles = css`
    :host { display: flex; flex-direction: column; width: 1080px; height: 2400px; overflow: hidden; background: #fff; }
    .main { display: flex; height: 1052px; }
    status-bar, stock-header, quote-summary, comment-bar, content-cards, bottom-bar { flex: none; }
  `;
  render() {
    return html`<status-bar></status-bar><stock-header></stock-header><quote-summary></quote-summary><period-tabs></period-tabs>
      <div class="main"><price-chart></price-chart><order-book></order-book></div>
      <comment-bar></comment-bar><content-cards></content-cards><bottom-bar></bottom-bar>`;
  }
}
